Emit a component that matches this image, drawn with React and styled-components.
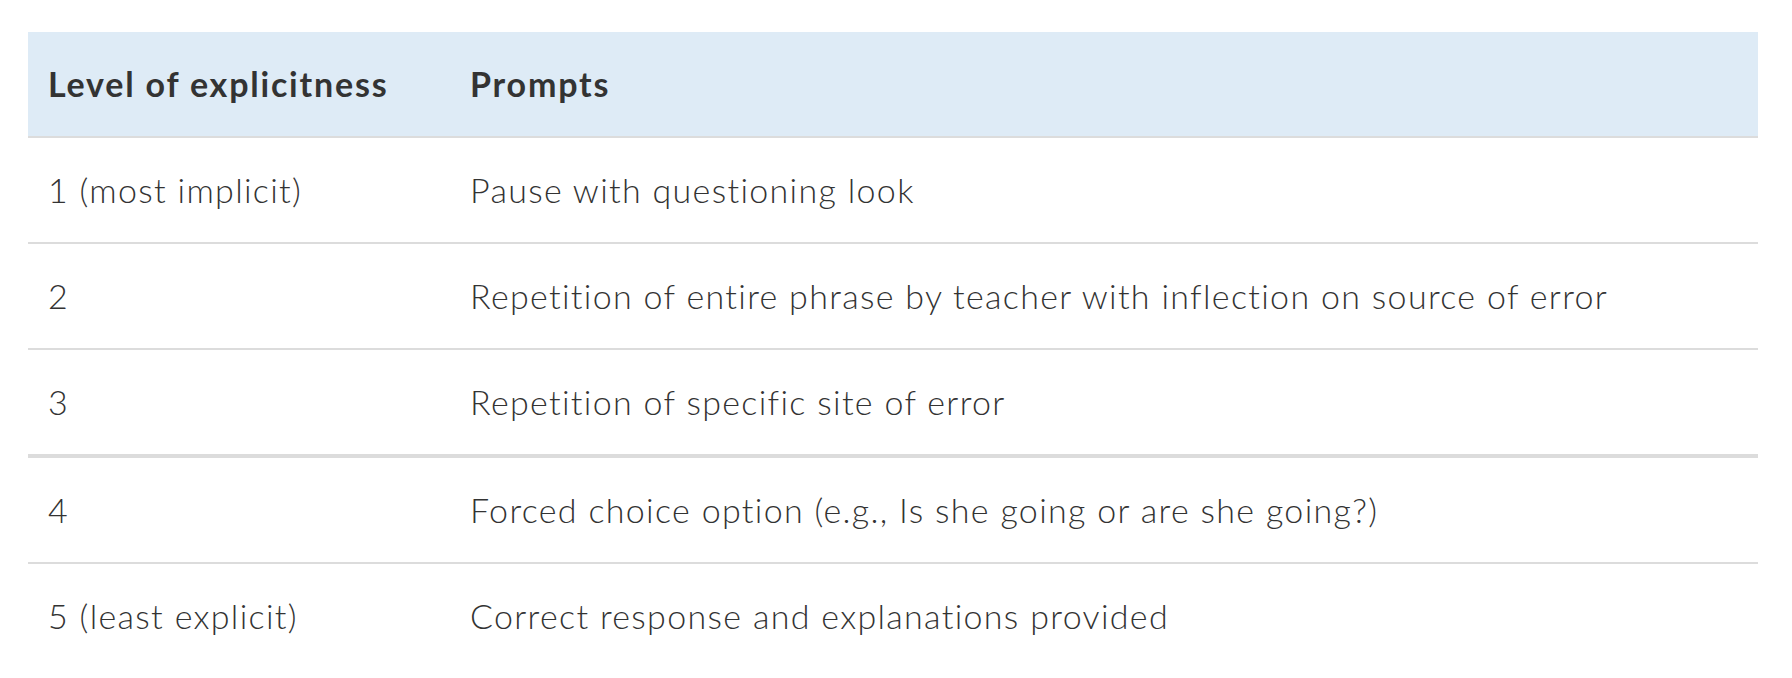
import React from "react";
import styled, { createGlobalStyle } from "styled-components";

const GlobalStyle = createGlobalStyle`
  body {
    margin: 0;
    background: #ffffff;
    font-family: Lato, "Open Sans", "Liberation Sans", sans-serif;
    color: #333333;
  }
`;

const Page = styled.div`
  padding: 32px 34px 0 28px;
`;

const Table = styled.table`
  width: 100%;
  border-collapse: collapse;
  font-size: 34px;
  line-height: 48px;
`;

const HeadRow = styled.tr`
  background: #deebf6;
  border-bottom: 2px solid #dcdcdc;
`;

const HeadCell = styled.th`
  text-align: left;
  font-weight: 700;
  letter-spacing: 1.8px;
  padding: 28px 20px;
  color: #333333;
  width: ${(p) => p.$width || "auto"};
`;

const Row = styled.tr`
  border-bottom: ${(p) => (p.$last ? "none" : `${p.$thick ? 4 : 2}px solid #dcdcdc`)};
`;

const Cell = styled.td`
  padding: 28px 20px;
  font-weight: 300;
  letter-spacing: 1.32px;
  color: #333333;
  vertical-align: middle;
`;

const rows = [
  ["1 (most implicit)", "Pause with questioning look"],
  ["2", "Repetition of entire phrase by teacher with inflection on source of error"],
  ["3", "Repetition of specific site of error"],
  ["4", "Forced choice option (e.g., Is she going or are she going?)"],
  ["5 (least explicit)", "Correct response and explanations provided"],
];

const App = () => {
  return (
    <Page>
      <GlobalStyle />
      <Table>
        <thead>
          <HeadRow>
            <HeadCell $width="382px">Level of explicitness</HeadCell>
            <HeadCell>Prompts</HeadCell>
          </HeadRow>
        </thead>
        <tbody>
          {rows.map(([level, prompt], i) => (
            <Row key={i} $thick={i === 2} $last={i === rows.length - 1}>
              <Cell>{level}</Cell>
              <Cell>{prompt}</Cell>
            </Row>
          ))}
        </tbody>
      </Table>
    </Page>
  );
};

export default App;
